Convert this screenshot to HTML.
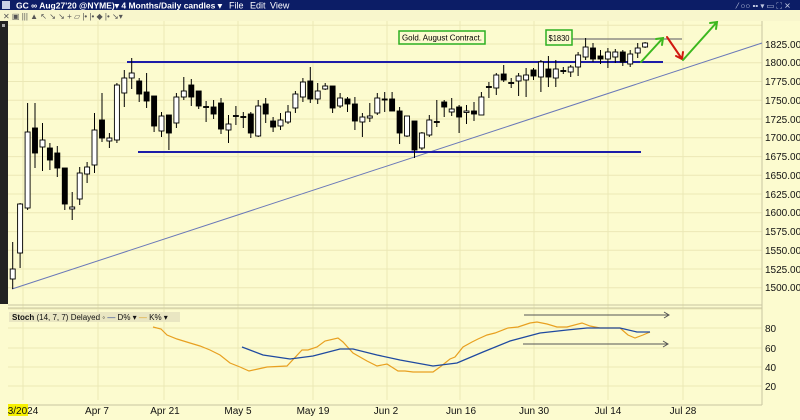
<!DOCTYPE html>
<html><head><meta charset="utf-8"><style>
body{margin:0;width:800px;height:420px;overflow:hidden;background:#fcfbcf;font-family:"Liberation Sans",sans-serif}
</style></head><body>
<svg width="800" height="420" xmlns="http://www.w3.org/2000/svg" style="position:absolute;left:0;top:0">
<rect x="0" y="0" width="800" height="420" fill="#fcfbcf"/>
<rect x="0" y="0" width="800" height="10" fill="#0c1d66"/>
<rect x="2" y="1" width="8" height="8" fill="#c8d0e8"/>
<text x="16" y="8.5" font-size="8.5" font-weight="bold" fill="#fff" textLength="206" lengthAdjust="spacingAndGlyphs">GC ∞ Aug27'20 @NYME)▾ 4 Months/Daily candles ▾</text>
<text x="229" y="8.5" font-size="9" fill="#fff">File</text><text x="250" y="8.5" font-size="9" fill="#fff">Edit</text><text x="270" y="8.5" font-size="9" fill="#fff">View</text>
<text x="737" y="8.5" font-size="8" fill="#c0c8e0">⁄ ○○ ▪▪ ▾  ▭ ⛶ ✕</text>
<rect x="0" y="10" width="800" height="11" fill="#f8f6cc"/>
<text x="3" y="19" font-size="8" fill="#555">✕ ▣ ||| ▲ ↖ ↘ ↘ + ▱ |• |• ◆ |• ↘▾</text>
<rect x="0" y="21" width="8" height="283" fill="#222"/>
<rect x="2" y="24" width="3" height="3" fill="#aaa"/>
<g stroke="#ebe8b6" stroke-width="1">
<path d="M23 21V400M98 21V400M164 21V400M238 21V400M313 21V400M387 21V400M460 21V400M534 21V400M608 21V400M683 21V400"/>
<path d="M8 25.3H762M8 44H762M8 62.8H762M8 81.5H762M8 100.3H762M8 119H762M8 137.8H762M8 156.6H762M8 175.3H762M8 194H762M8 212.8H762M8 231.6H762M8 250.3H762M8 269H762M8 287.8H762"/>
<path d="M8 309H762M8 328H762M8 348H762M8 367H762M8 386H762"/>
</g>
<path d="M762 21V405M8 305H762M8 308H762M8 405H762" stroke="#c9c6a0" stroke-width="1" fill="none"/>
<g font-size="10" fill="#111">
<text x="765" y="48">1825.00</text><text x="765" y="66">1800.00</text><text x="765" y="85">1775.00</text><text x="765" y="104">1750.00</text><text x="765" y="123">1725.00</text><text x="765" y="141">1700.00</text><text x="765" y="160">1675.00</text><text x="765" y="179">1650.00</text><text x="765" y="198">1625.00</text><text x="765" y="216">1600.00</text><text x="765" y="235">1575.00</text><text x="765" y="254">1550.00</text><text x="765" y="273">1525.00</text><text x="765" y="291">1500.00</text>
<text x="765" y="332">80</text><text x="765" y="352">60</text><text x="765" y="371">40</text><text x="765" y="390">20</text>
</g>
<line x1="12" y1="289" x2="762" y2="43" stroke="#6a78b8" stroke-width="1"/>
<line x1="127" y1="62" x2="663" y2="62" stroke="#1c1ca8" stroke-width="2"/>
<line x1="138" y1="152" x2="641" y2="152" stroke="#1c1ca8" stroke-width="2"/>
<line x1="572" y1="39" x2="682" y2="39" stroke="#777" stroke-width="1.2"/>
<path stroke="#000" stroke-width="1" fill="none" d="M12.7 242V289M20.1 203V268M27.6 103V210M35 103V168M42.5 123V171M49.9 143V170M57.3 146V177M64.8 168V210M72.2 192V220M79.7 167V205M87.1 162V183M94.5 113V173M102 93V142M109.4 133V148M116.9 83V143M124.3 70V107M131.7 58V89M139.2 78V102M146.6 73V108M154.1 96V132M161.5 112V137M168.9 115V150M176.4 93V128M183.8 77V100M191.3 79V106M198.7 91V109M206.1 101V122M213.6 100V119M221 98V134M228.5 115V143M235.9 106V125M243.3 112V128M250.8 112V138M258.2 100V137M265.7 98V123M273.1 117V132M280.5 113V130M288 105V124M295.4 91V113M302.9 78V102M310.3 67V103M317.7 83V104M325.2 83V90M332.6 86V113M340.1 93V108M347.5 97V112M354.9 97V130M362.4 113V137M369.8 103V122M377.3 93V115M384.7 92V112M392.1 92V111M399.6 107V144M407 116V137M414.5 121V158M421.9 132V150M429.3 115V137M436.8 100V127M444.2 100V117M451.7 98V116M459.1 105V133M466.5 105V124M474 102V121M481.4 92V115M488.9 82V98M496.3 73V95M503.7 65V82M511.2 78V88M518.6 73V96M526.1 68V97M533.5 68V80M540.9 60V92M548.4 56V87M555.8 60V87M563.3 67V74M570.7 65V77M578.1 52V76M585.6 38V60M593 43V62M600.5 50V64M607.9 48V68M615.3 49V63M622.8 50V66M630.2 50V67M637.7 43V58M645.1 42V48"/>
<g stroke="#000" stroke-width="0.9">
<rect x="10.2" y="269" width="5" height="10" fill="#fff"/><rect x="17.6" y="204" width="5" height="49" fill="#fff"/><rect x="25.1" y="132" width="5" height="76" fill="#fff"/><rect x="32.5" y="128" width="5" height="25" fill="#000"/><rect x="40" y="140" width="5" height="7" fill="#fff"/><rect x="47.4" y="148" width="5" height="12" fill="#000"/><rect x="54.8" y="153" width="5" height="15" fill="#000"/><rect x="62.3" y="168" width="5" height="36" fill="#000"/><rect x="69.7" y="207" width="5" height="2" fill="#fff"/><rect x="77.2" y="173" width="5" height="26" fill="#fff"/><rect x="84.6" y="167" width="5" height="7" fill="#fff"/><rect x="92" y="130" width="5" height="35" fill="#fff"/><rect x="99.5" y="120" width="5" height="18" fill="#000"/><rect x="106.9" y="138" width="5" height="3" fill="#fff"/><rect x="114.4" y="85" width="5" height="55" fill="#fff"/><rect x="121.8" y="78" width="5" height="15" fill="#fff"/><rect x="129.2" y="73" width="5" height="5" fill="#fff"/><rect x="136.7" y="81" width="5" height="13" fill="#000"/><rect x="144.1" y="92" width="5" height="9" fill="#000"/><rect x="151.6" y="96" width="5" height="30" fill="#000"/><rect x="159" y="116" width="5" height="15" fill="#fff"/><rect x="166.4" y="115" width="5" height="18" fill="#000"/><rect x="173.9" y="97" width="5" height="26" fill="#fff"/><rect x="181.3" y="91" width="5" height="6" fill="#fff"/><rect x="188.8" y="85" width="5" height="12" fill="#000"/><rect x="196.2" y="91" width="5" height="15" fill="#000"/><rect x="203.6" y="106.5" width="5" height="1" fill="#000"/><rect x="211.1" y="107" width="5" height="7" fill="#000"/><rect x="218.5" y="103" width="5" height="26" fill="#000"/><rect x="226" y="124" width="5" height="6" fill="#fff"/><rect x="233.4" y="115.5" width="5" height="1" fill="#000"/><rect x="240.8" y="116.5" width="5" height="1" fill="#000"/><rect x="248.3" y="114" width="5" height="19" fill="#000"/><rect x="255.7" y="106" width="5" height="30" fill="#fff"/><rect x="263.2" y="104" width="5" height="10" fill="#000"/><rect x="270.6" y="121" width="5" height="6" fill="#000"/><rect x="278" y="120" width="5" height="6" fill="#fff"/><rect x="285.5" y="112" width="5" height="10" fill="#fff"/><rect x="292.9" y="94" width="5" height="14" fill="#fff"/><rect x="300.4" y="82" width="5" height="15" fill="#fff"/><rect x="307.8" y="81" width="5" height="18" fill="#000"/><rect x="315.2" y="91" width="5" height="8" fill="#fff"/><rect x="322.7" y="86" width="5" height="3" fill="#fff"/><rect x="330.1" y="86" width="5" height="22" fill="#000"/><rect x="337.6" y="98" width="5" height="8" fill="#fff"/><rect x="345" y="99" width="5" height="5" fill="#000"/><rect x="352.4" y="104" width="5" height="17" fill="#000"/><rect x="359.9" y="117" width="5" height="5" fill="#fff"/><rect x="367.3" y="116" width="5" height="2" fill="#fff"/><rect x="374.8" y="98" width="5" height="15" fill="#fff"/><rect x="382.2" y="99" width="5" height="1" fill="#000"/><rect x="389.6" y="99" width="5" height="12" fill="#000"/><rect x="397.1" y="111" width="5" height="22" fill="#000"/><rect x="404.5" y="116" width="5" height="20" fill="#fff"/><rect x="412" y="121" width="5" height="29" fill="#000"/><rect x="419.4" y="133" width="5" height="15" fill="#fff"/><rect x="426.8" y="120" width="5" height="15" fill="#fff"/><rect x="434.3" y="121.5" width="5" height="1" fill="#000"/><rect x="441.7" y="102" width="5" height="5" fill="#000"/><rect x="449.2" y="109" width="5" height="3" fill="#fff"/><rect x="456.6" y="107" width="5" height="10" fill="#000"/><rect x="464" y="111" width="5" height="1.5" fill="#fff"/><rect x="471.5" y="111" width="5" height="3" fill="#000"/><rect x="478.9" y="97" width="5" height="18" fill="#fff"/><rect x="486.4" y="86.5" width="5" height="1" fill="#000"/><rect x="493.8" y="75" width="5" height="13" fill="#fff"/><rect x="501.2" y="74" width="5" height="6" fill="#000"/><rect x="508.7" y="82.5" width="5" height="1" fill="#000"/><rect x="516.1" y="76" width="5" height="5" fill="#fff"/><rect x="523.6" y="75" width="5" height="5" fill="#fff"/><rect x="531" y="70" width="5" height="6" fill="#000"/><rect x="538.4" y="62" width="5" height="15" fill="#fff"/><rect x="545.9" y="69" width="5" height="8" fill="#000"/><rect x="553.3" y="69" width="5" height="9" fill="#fff"/><rect x="560.8" y="70.5" width="5" height="1" fill="#000"/><rect x="568.2" y="67" width="5" height="5" fill="#fff"/><rect x="575.6" y="55" width="5" height="12" fill="#fff"/><rect x="583.1" y="47" width="5" height="10" fill="#fff"/><rect x="590.5" y="48" width="5" height="11" fill="#000"/><rect x="598" y="56" width="5" height="3" fill="#000"/><rect x="605.4" y="52" width="5" height="7" fill="#fff"/><rect x="612.8" y="52" width="5" height="5" fill="#fff"/><rect x="620.3" y="52" width="5" height="10" fill="#000"/><rect x="627.7" y="54" width="5" height="10" fill="#fff"/><rect x="635.2" y="48" width="5" height="5" fill="#fff"/><rect x="642.6" y="43" width="5" height="4" fill="#fff"/>
</g>
<g stroke-width="2" fill="none" stroke-linecap="round">
<path d="M641 62L663 38M656 39L663 38L662 45" stroke="#3cb81e"/>
<path d="M667 37L682 59M676 56L682 59L683 52" stroke="#d01a10"/>
<path d="M683 60L717 22M710 23L717 22L716 29" stroke="#3cb81e"/>
</g>
<rect x="399" y="31" width="86" height="13" fill="#fcfbcf" stroke="#2cb020" stroke-width="1.5"/>
<text x="402" y="40.5" font-size="8" fill="#000" textLength="80" lengthAdjust="spacingAndGlyphs">Gold. August Contract.</text>
<rect x="546" y="30" width="26" height="15" fill="#fcfbcf" stroke="#2cb020" stroke-width="1.5"/>
<text x="548.5" y="41" font-size="8.5" fill="#000" textLength="21" lengthAdjust="spacingAndGlyphs">$1830</text>
<rect x="9" y="312" width="171" height="10" fill="#e9e6c2"/>
<text x="12" y="320" font-size="8" fill="#111"><tspan font-weight="bold">Stoch</tspan>  (14, 7, 7) Delayed ◦ <tspan fill="#1f3a90">—</tspan> D% ▾ <tspan fill="#e0a020">—</tspan> K% ▾</text>
<polyline fill="none" stroke="#e8a020" stroke-width="1.2" points="153,327 161,329 167,335 177,339 190,343 200,346 210,350 220,355 230,363 240,367 249,371 258,369 267,367 287,366 302,350 308,350 317,347 325,341 338,338 343,342 353,353 367,361 377,366 387,364 398,371 405,371 413,372 433,372 440,367 450,359 455,357 463,347 472,342 478,339 487,335 495,333 508,328 518,327 530,323 537,322 547,324 557,327 567,327 582,323 590,326 600,328 620,328 628,335 635,338 643,335 650,332"/>
<polyline fill="none" stroke="#1f4aa0" stroke-width="1.3" points="242,347 263,355 290,359 313,356 340,349 353,349 377,355 400,360 433,366 457,363 483,352 510,341 540,333 567,330 587,328 620,328 637,332 650,332"/>
<g stroke="#555" stroke-width="1" fill="none">
<path d="M524 315H669M664 312L669 315L664 318"/>
<path d="M523 344H668M663 341L668 344L663 347"/>
</g>
<rect x="8" y="404" width="20" height="12" fill="#f6f000"/>
<g font-size="10" fill="#111" text-anchor="middle">
<text x="23" y="414">3/2024</text><text x="97" y="414">Apr 7</text><text x="165" y="414">Apr 21</text><text x="238" y="414">May 5</text><text x="313" y="414">May 19</text><text x="386" y="414">Jun 2</text><text x="461" y="414">Jun 16</text><text x="534" y="414">Jun 30</text><text x="608" y="414">Jul 14</text><text x="683" y="414">Jul 28</text>
</g>
</svg>
</body></html>
